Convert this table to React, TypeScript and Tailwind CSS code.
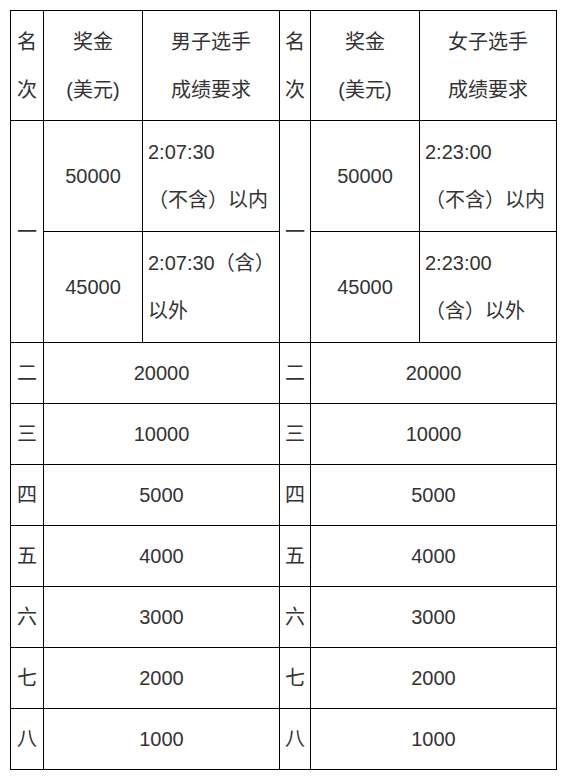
const font = '"Liberation Sans", "Noto Sans CJK SC", sans-serif'

const rows = [
  ['二', '20000'],
  ['三', '10000'],
  ['四', '5000'],
  ['五', '4000'],
  ['六', '3000'],
  ['七', '2000'],
  ['八', '1000'],
]

const td = 'border border-black text-center align-middle p-0'
const tdLeft = 'border border-black text-left align-middle pl-[5px]'

export default function App() {
  return (
    <div className="bg-white min-h-[780px] pt-[10px] pl-[10px]" style={{ fontFamily: font }}>
      <table className="border-collapse table-fixed w-[546px] text-[20px] leading-[48px] text-[#333]">
        <colgroup>
          <col className="w-[33px]" />
          <col className="w-[99px]" />
          <col className="w-[137px]" />
          <col className="w-[31px]" />
          <col className="w-[109px]" />
          <col className="w-[137px]" />
        </colgroup>
        <tbody>
          <tr className="h-[110px]">
            <td className={td}>名<br />次</td>
            <td className={td}>奖金<br />(美元)</td>
            <td className={td}>男子选手<br />成绩要求</td>
            <td className={td}>名<br />次</td>
            <td className={td}>奖金<br />(美元)</td>
            <td className={td}>女子选手<br />成绩要求</td>
          </tr>
          <tr className="h-[111px]">
            <td className={td} rowSpan={2}>一</td>
            <td className={td}>50000</td>
            <td className={tdLeft}>2:07:30<br />（不含）以内</td>
            <td className={td} rowSpan={2}>一</td>
            <td className={td}>50000</td>
            <td className={tdLeft}>2:23:00<br />（不含）以内</td>
          </tr>
          <tr className="h-[111px]">
            <td className={td}>45000</td>
            <td className={tdLeft}>2:07:30（含）<br />以外</td>
            <td className={td}>45000</td>
            <td className={tdLeft}>2:23:00<br />（含）以外</td>
          </tr>
          {rows.map(([rank, prize]) => (
            <tr key={rank} className="h-[61px]">
              <td className={td}>{rank}</td>
              <td className={td} colSpan={2}>{prize}</td>
              <td className={td}>{rank}</td>
              <td className={td} colSpan={2}>{prize}</td>
            </tr>
          ))}
        </tbody>
      </table>
    </div>
  )
}
